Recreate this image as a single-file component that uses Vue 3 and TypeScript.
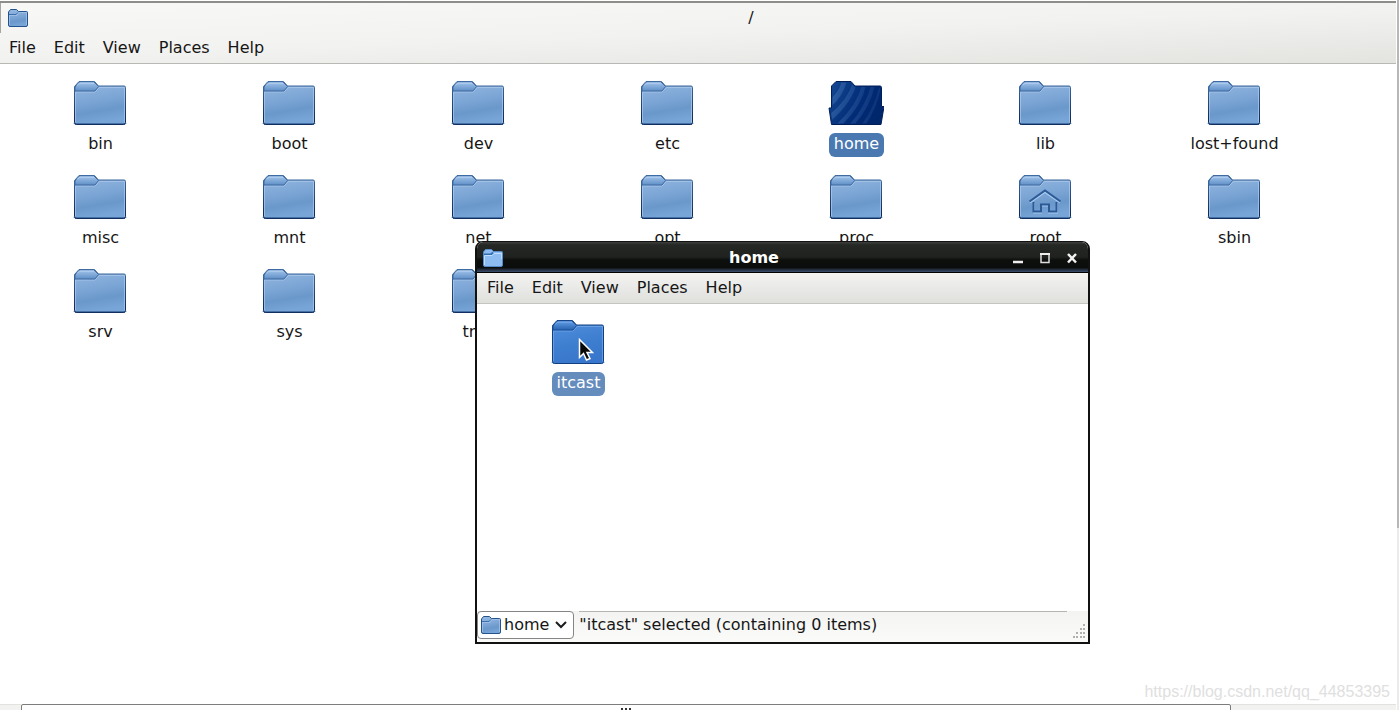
<script setup lang="ts">
type Kind = 'plain' | 'open' | 'user'
interface Entry { name: string; kind: Kind }

const menus: string[] = ['File', 'Edit', 'View', 'Places', 'Help']
const names: string[] = [
  'bin', 'boot', 'dev', 'etc', 'home', 'lib', 'lost+found',
  'misc', 'mnt', 'net', 'opt', 'proc', 'root', 'sbin',
  'srv', 'sys', 'tmp',
]
const kinds: Record<string, Kind> = { home: 'open', root: 'user' }
const entries: Entry[] = names.map((name) => ({ name, kind: kinds[name] ?? 'plain' }))
</script>

<template>
  <div class="desktop">
    <svg class="defs" aria-hidden="true">
      <defs>
        <linearGradient id="body" x1="0" y1="0" x2="0.2" y2="1">
          <stop offset="0" stop-color="#97bae2" />
          <stop offset="0.5" stop-color="#7ba5d5" />
          <stop offset="0.75" stop-color="#6a98ca" />
          <stop offset="1" stop-color="#78a5d8" />
        </linearGradient>
        <linearGradient id="tab" x1="0" y1="0" x2="0" y2="1">
          <stop offset="0" stop-color="#a3c5ec" />
          <stop offset="1" stop-color="#5f8fc6" />
        </linearGradient>
        <linearGradient id="edge" x1="0" y1="0" x2="0" y2="1">
          <stop offset="0" stop-color="#3f6ca2" />
          <stop offset="1" stop-color="#0a2450" />
        </linearGradient>
        <linearGradient id="bodyHot" x1="0" y1="0" x2="0.3" y2="1">
          <stop offset="0" stop-color="#5290dd" />
          <stop offset="0.6" stop-color="#3f7fd0" />
          <stop offset="1" stop-color="#3877cb" />
        </linearGradient>
        <linearGradient id="tabHot" x1="0" y1="0" x2="0" y2="1">
          <stop offset="0" stop-color="#639ee6" />
          <stop offset="1" stop-color="#2863b2" />
        </linearGradient>
        <linearGradient id="dark" x1="0" y1="0" x2="1" y2="0.4">
          <stop offset="0" stop-color="#174a94" />
          <stop offset="0.6" stop-color="#032d78" />
          <stop offset="1" stop-color="#00266c" />
        </linearGradient>
        <linearGradient id="stripe" gradientUnits="userSpaceOnUse" x1="0" y1="0" x2="56" y2="10">
          <stop offset="0" stop-color="#5b8ac6" stop-opacity=".4" />
          <stop offset="1" stop-color="#3f72b6" stop-opacity=".15" />
        </linearGradient>
        <clipPath id="openClip">
          <path d="M4.500 6 8.500 2.500H22.500L26.500 7H52V27H55L52 43.500H4.500L2.500 29H4.500Z" />
        </clipPath>
        <symbol id="folder" viewBox="0 0 56 46">
          <path d="M1 43.500Q2 42 3 42H53Q54 42 55 43.500L52 45H4Z" fill="#7f9fc4" opacity=".65" />
          <path d="M2.500 10V6.500L7 1.500H22.500L26.500 6H52Q53.500 6 53.500 7.500V42.500Q53.500 44.500 51.500 44.500H4.500Q2.500 44.500 2.500 42.500Z" fill="url(#body)" stroke="url(#edge)" />
          <path d="M3.500 42V12H23L27.500 7.500H52.500V42.500" fill="none" stroke="#b2cdec" opacity=".65" />
          <path d="M3 11V7L7.500 2H22L26.500 6.500 23 11Z" fill="url(#tab)" stroke="#3f6ba2" />
          <path d="M5 5.500 7.500 3H22" fill="none" stroke="#bdd6f4" />
          <path d="M3 44H53" stroke="#163b70" />
        </symbol>
        <symbol id="folderHot" viewBox="0 0 56 46">
          <path d="M1 43.500Q2 42 3 42H53Q54 42 55 43.500L52 45H4Z" fill="#7f9fc4" opacity=".65" />
          <path d="M2.500 10V6.500L7 1.500H22.500L26.500 6H52Q53.500 6 53.500 7.500V42.500Q53.500 44.500 51.500 44.500H4.500Q2.500 44.500 2.500 42.500Z" fill="url(#bodyHot)" stroke="#123f80" />
          <path d="M3.500 42V12H23L27.500 7.500H52.500V42.500" fill="none" stroke="#7eb0ee" opacity=".6" />
          <path d="M3 11V7L7.500 2H22L26.500 6.500 23 11Z" fill="url(#tabHot)" stroke="#1d519a" />
          <path d="M5 5.500 7.500 3H22" fill="none" stroke="#80b2f0" />
        </symbol>
        <symbol id="folderOpen" viewBox="0 0 56 46">
          <path d="M3.500 26V6L8 1.500H23L27 6H52Q53.500 6 53.500 7.500V26.500H56L53 44.500H3.500L1 28H3.500Z" fill="url(#dark)" stroke="#001f58" />
          <g clip-path="url(#openClip)">
            <path d="M14 0Q12 12 0 21V29Q15 18 19 0ZM25 2Q20 20 0 36V43Q24 24 29 2ZM34 5Q29 25 9 44H15Q34 25 38 5ZM43 5Q38 26 22 44H27Q42 27 47 5ZM51 8Q46 28 34 44H38Q48 30 53 8Z" fill="url(#stripe)" />
          </g>
        </symbol>
        <symbol id="small" viewBox="0 0 20 18">
          <path d="M.5 15V3L2.500 .5H8.500L10.500 2.500H18.500Q19.500 2.500 19.500 3.500V16Q19.500 17.500 18 17.500H2Q.5 17.500 .5 16Z" fill="url(#body)" stroke="#24528b" />
          <path d="M1 5.500H8L10 3.500" fill="none" stroke="#3f6fa9" />
          <path d="M1.500 16V6.500H9L11 3.500H18.500V16" fill="none" stroke="#a8c7ec" opacity=".7" />
        </symbol>
        <symbol id="smallLight" viewBox="0 0 20 18">
          <path d="M.5 15V3L2.500 .5H8.500L10.500 2.500H18.500Q19.500 2.500 19.500 3.500V16Q19.500 17.500 18 17.500H2Q.5 17.500 .5 16Z" fill="#8dbcf3" stroke="#568ac8" />
          <path d="M1 5.500H8L10 3.500" fill="none" stroke="#326dae" stroke-width="2" />
          <path d="M1.500 16V6.500H9L11 4.500H18.500V10" fill="none" stroke="#c0dcff" />
        </symbol>
      </defs>
    </svg>

    <section class="root-window">
      <header class="chrome">
        <div class="title-row">
          <svg class="small-icon" aria-hidden="true"><use href="#small" /></svg>
          <h1>/</h1>
        </div>
        <nav class="menu">
          <button v-for="m in menus" :key="m" type="button">{{ m }}</button>
        </nav>
      </header>

      <main class="files">
        <button
          v-for="e in entries"
          :key="e.name"
          type="button"
          class="file"
          :class="{ selected: e.kind === 'open' }"
        >
          <svg class="icon" viewBox="0 0 56 46" aria-hidden="true">
            <use :href="e.kind === 'open' ? '#folderOpen' : '#folder'" />
            <g v-if="e.kind === 'user'" fill="none" stroke-linejoin="miter">
              <path d="M13 28.500 28 18 43 28.500M17 29V38.500H24V31.500H32V38.500H40V29" stroke="#a8c9ef" stroke-width="2" />
              <path d="M12.500 27.500 28 16.500 43.500 27.500M16.500 28V37.500H24V30.500H32V37.500H39.500V28" stroke="#2b5a97" stroke-width="2" />
            </g>
          </svg>
          <span class="label">{{ e.name }}</span>
        </button>
      </main>

      <footer class="scrollbar">
        <span class="step"></span>
        <span class="thumb"><i></i><i></i><i></i></span>
        <span class="step end"></span>
      </footer>
    </section>
    <div class="screen-edge"></div>

    <section class="child">
      <header class="bar">
        <svg class="small-icon" aria-hidden="true"><use href="#smallLight" /></svg>
        <h2>home</h2>
        <div class="controls">
          <button type="button" aria-label="Minimize">
            <svg viewBox="0 0 12 12"><path d="M1 10H11" stroke="#eee" stroke-width="2.500" /></svg>
          </button>
          <button type="button" aria-label="Maximize">
            <svg viewBox="0 0 12 12"><path d="M2 2H10V10.500H2Z" fill="none" stroke="#ddd" stroke-width="1.500" /><path d="M1 2H11" stroke="#eee" stroke-width="2" /></svg>
          </button>
          <button type="button" aria-label="Close">
            <svg viewBox="0 0 12 12"><path d="M2 2 10 10.500M10 2 2 10.500" stroke="#f2f2f2" stroke-width="2.500" /></svg>
          </button>
        </div>
      </header>
      <nav class="menu child-menu">
        <button v-for="m in menus" :key="m" type="button">{{ m }}</button>
      </nav>
      <div class="child-files">
        <button type="button" class="file hot">
          <svg class="icon" viewBox="0 0 56 46" aria-hidden="true"><use href="#folderHot" /></svg>
          <span class="label">itcast</span>
        </button>
      </div>
      <footer class="status">
        <button type="button" class="place">
          <svg class="small-icon" aria-hidden="true"><use href="#small" /></svg>
          <span>home</span>
          <svg class="chevron" viewBox="0 0 14 10" aria-hidden="true"><path d="M2 2 7 7 12 2" fill="none" stroke="#1c1c1c" stroke-width="2" /></svg>
        </button>
        <p>"itcast" selected (containing 0 items)</p>
        <svg class="grip" viewBox="0 0 14 14" aria-hidden="true">
          <path d="M11 1h2M8 5h2M11 5h2M4 9h2M8 9h2M11 9h2M1 13h2M4 13h2M8 13h2M11 13h2" stroke="#b0b0ac" stroke-width="2" />
        </svg>
      </footer>
    </section>

    <svg class="cursor" viewBox="0 0 16 24" aria-hidden="true">
      <path d="M1.500 1.500V19.500L5.500 15.500 8.500 22 12 20.500 9 14.500H14.500Z" fill="#080808" stroke="#fff" stroke-width="1.500" />
    </svg>
    <div class="watermark">https://blog.csdn.net/qq_44853395</div>
  </div>
</template>

<style>
html, body { background: #fff; }
</style>

<style scoped>
.desktop {
  position: relative;
  display: flex;
  height: 100vh;
  overflow: hidden;
  background: #fff;
  color: #161616;
  font: 16px/20px "DejaVu Sans", sans-serif;
}
.defs { position: absolute; width: 0; height: 0; }
button {
  margin: 0;
  padding: 0;
  border: 0;
  background: none;
  color: inherit;
  font: inherit;
}
h1, h2, p { margin: 0; font: inherit; }
.root-window {
  flex: 1;
  display: flex;
  flex-direction: column;
  min-width: 0;
}
.chrome {
  margin-top: 1px;
  border-top: 2px solid #8d8d89;
  border-bottom: 1px solid #b8b8b4;
  background: linear-gradient(178deg, #f8f8f6 0%, #f2f2f0 50%, #e3e3e0 100%);
}
.title-row {
  display: flex;
  align-items: center;
  height: 30px;
  padding: 0 8px 0 7px;
  border-left: 1px solid #a5a5a2;
}
.small-icon { flex: none; width: 20px; height: 18px; }
h1 { flex: 1; padding-left: 86px; text-align: center; }
.menu {
  display: flex;
  align-items: center;
  gap: 2px;
  height: 30px;
  padding: 0 1px;
}
.menu button { padding: 0 8px; }
.files {
  flex: 1;
  min-height: 0;
  display: grid;
  grid-template-columns: repeat(auto-fill, 189px);
  grid-auto-rows: 94px;
  align-content: start;
  padding: 16px 0 0 5px;
}
.file {
  display: flex;
  flex-direction: column;
  align-items: center;
  gap: 7px;
}
.icon { width: 56px; height: 46px; }
.label {
  padding: 1px 5px 3px;
  margin-left: 2px;
  border-radius: 6px;
}
.selected .label { background: #4a78b1; color: #fff; }
.hot .label { background: #648cbd; color: #fff; }
.scrollbar {
  flex: none;
  display: flex;
  height: 6px;
  overflow: hidden;
  background: #f2f2f0;
}
.step { width: 21px; border-top: 1px solid #e2e2df; }
.step.end { flex: 1; }
.thumb {
  flex: 0 0 auto;
  box-sizing: border-box;
  display: flex;
  justify-content: center;
  align-items: flex-end;
  gap: 2px;
  width: calc(87% - 5px);
  height: 16px;
  padding-bottom: 9px;
  border: 1px solid #7c7c7c;
  border-radius: 2px;
  background: #fdfdfd;
}
.thumb i { width: 2px; height: 2px; background: #333; }
.screen-edge {
  flex: none;
  width: 2px;
  margin-left: 1px;
  background: linear-gradient(#b7b7b7 0 528px, #ececec 528px);
}
.child {
  position: absolute;
  left: 475px;
  top: 241px;
  box-sizing: border-box;
  display: flex;
  flex-direction: column;
  width: 615px;
  height: 403px;
  border: 2px solid #111;
  border-top-width: 1px;
  border-radius: 8px 8px 0 0;
  overflow: hidden;
  background: #fff;
}
.bar {
  flex: none;
  display: flex;
  align-items: center;
  height: 31px;
  box-sizing: border-box;
  padding: 2px 10px 0 6px;
  border-bottom: 1px solid #000;
  background: linear-gradient(#3c3f3b 0, #252724 3px, #20221f 50%, #0d0f0d 60%, #0b0d0c 85%, #3c4f70 100%);
  color: #fff;
}
h2 { flex: 1; padding-right: 7px; text-align: center; font-weight: bold; }
.controls { display: flex; gap: 15px; }
.controls button, .controls svg { display: block; width: 12px; height: 12px; }
.child-menu {
  flex: none;
  box-sizing: border-box;
  height: 31px;
  padding: 0 2px;
  border-bottom: 1px solid #c4c4c0;
  background: linear-gradient(#f3f3f2, #dfdfdc);
}
.child-files { flex: 1; padding: 15px 0 0 6px; }
.child-files .file { width: 189px; }
.status {
  flex: none;
  display: flex;
  align-items: flex-start;
  gap: 5px;
  height: 31px;
  background: linear-gradient(#f3f3f1, #fbfbfa);
}
.place {
  display: flex;
  align-items: center;
  gap: 3px;
  height: 28px;
  padding: 0 5px 0 3px;
  border: 1px solid #858585;
  border-radius: 4px;
  background: #fff;
}
.chevron { width: 14px; height: 10px; margin-left: 2px; }
.status p {
  flex: 1;
  padding-top: 3px;
  border-top: 1px solid #b4b4b1;
}
.grip { width: 14px; height: 14px; align-self: flex-end; margin: 0 2px 4px 0; }
.cursor {
  position: absolute;
  left: 578px;
  top: 338px;
  width: 16px;
  height: 24px;
}
.watermark {
  position: absolute;
  right: 9px;
  bottom: 8px;
  color: #e0e0e0;
  font-family: "Liberation Sans", sans-serif;
}
</style>
